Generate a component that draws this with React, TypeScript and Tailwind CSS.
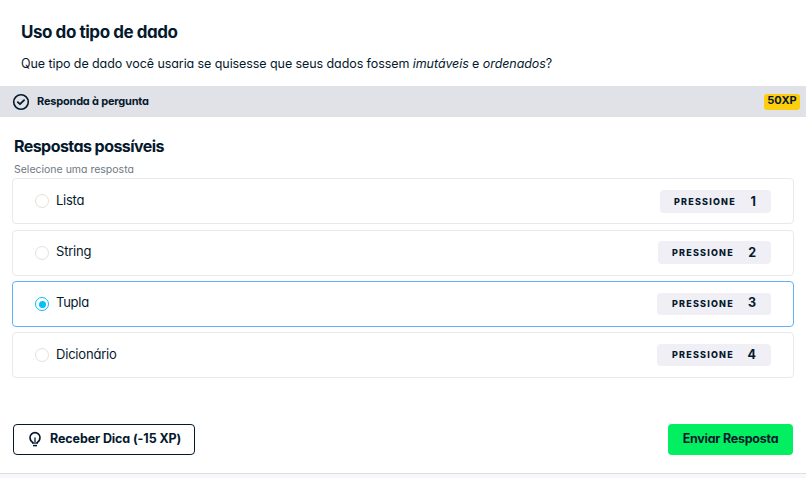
import React from "react";

type Answer = {
  label: string;
  labelClass: string;
  rowClass: string;
  badgeClass: string;
  digitClass: string;
};

const answers: Answer[] = [
  { label: "Lista", labelClass: "pb-[3px] tracking-[-0.25px]", rowClass: "mb-[6px]", badgeClass: "h-[23px] w-[111px] mt-[1px] pl-[14px]", digitClass: "" },
  { label: "String", labelClass: "pb-[4px] tracking-[-0.2px]", rowClass: "mb-[5px]", badgeClass: "h-[23px] w-[113px] mt-[-1px] pl-[14px]", digitClass: "" },
  { label: "Tupla", labelClass: "pb-[4px] tracking-[-0.25px]", rowClass: "mb-[5px]", badgeClass: "h-[22px] w-[114px] pl-[15px]", digitClass: "pb-[2px]" },
  { label: "Dicionário", labelClass: "pb-[3px] tracking-[-0.2px]", rowClass: "", badgeClass: "h-[22px] w-[114px] pl-[15px]", digitClass: "" },
];

function CheckCircle() {
  return (
    <svg className="h-[18px] w-[18px] shrink-0" viewBox="0 0 18 18" fill="none" stroke="#05192d">
      <circle cx="9" cy="9" r="7.3" strokeWidth="1.6" />
      <path d="M5.8 9.100 8 11.200l4.100-4.100" strokeWidth="1.800" strokeLinecap="round" strokeLinejoin="round" />
    </svg>
  );
}

function Bulb() {
  return (
    <svg className="-mt-px h-[16px] w-[12px] shrink-0" viewBox="0 0 12 16" fill="none" stroke="#05192d">
      <path d="M4 13V11.600C2.100 10.600 1 8.700 1 6.600a5 5 0 0 1 10 0c0 2.100-1.100 4-3 5V13" strokeWidth="1.600" />
      <path d="M6 6.500v6.500" strokeWidth="1.300" />
      <path d="M4 14.600h4" strokeWidth="1.500" />
    </svg>
  );
}

export default function App() {
  const [selected, setSelected] = React.useState(2);
  return (
    <main className="flex h-[478px] w-[806px] flex-col overflow-hidden bg-white font-['Inter','Liberation_Sans',sans-serif] text-[#05192d] [font-feature-settings:'cv11']">
      <header className="flex h-[86px] shrink-0 flex-col items-start pl-[21px] pt-[22px] whitespace-nowrap">
        <h1 className="text-[17px] leading-5 font-bold tracking-[-0.45px]">Uso do tipo de dado</h1>
        <p className="mt-[12px] text-[12.5px] leading-5 tracking-[-0.08px]">
          Que tipo de dado você usaria se quisesse que seus dados fossem <em>imutáveis</em> e <em>ordenados</em>?
        </p>
      </header>

      <div className="flex h-[31px] shrink-0 items-center bg-[#e1e2e7] pr-[6px] pl-[12px]">
        <CheckCircle />
        <span className="ml-[7px] pb-px text-[11px] leading-4 font-bold tracking-[-0.2px]">Responda à pergunta</span>
        <span className="ml-auto flex h-[16px] w-[36px] items-center justify-center rounded-[3px] bg-[#fcce0d] pb-[3px] text-[11px] leading-none font-bold">
          50XP
        </span>
      </div>

      <section className="flex shrink-0 flex-col pr-[12px] pl-[12px] pt-[19px]">
        <h2 className="pl-[2px] text-[16px] leading-5 font-bold tracking-[-0.56px]">Respostas possíveis</h2>
        <p className="mt-[6px] pl-[2px] text-[10.5px] leading-4 text-[#6f7782]">Selecione uma resposta</p>
        <div className="flex flex-col">
          {answers.map((a, i) => (
            <label
              key={a.label}
              className={`flex h-[46px] items-center rounded-[4px] border pr-[22px] pl-[22px] ${a.rowClass} ${
                selected === i ? "border-[#5eb1ff]" : "border-[#e8e8ee]"
              }`}
            >
              <input type="radio" name="answer" className="sr-only" checked={selected === i} onChange={() => setSelected(i)} />
              <span
                className={`flex h-[14px] w-[14px] items-center justify-center rounded-full border ${
                  selected === i ? "border-[#06bdfc]" : "border-[#e5e1da]"
                }`}
              >
                {selected === i && <span className="h-[7px] w-[7px] rounded-full bg-[#06bdfc]" />}
              </span>
              <span className={`ml-[7px] text-[13px] leading-5 ${a.labelClass}`}>{a.label}</span>
              <span className={`ml-auto flex items-center justify-between rounded-[4px] bg-[#efeff5] pr-[15px] ${a.badgeClass}`}>
                <span className="text-[9px] leading-4 font-extrabold tracking-[1.2px]">PRESSIONE</span>
                <span className={`text-[12.5px] leading-4 font-bold ${a.digitClass}`}>{i + 1}</span>
              </span>
            </label>
          ))}
        </div>
      </section>

      <footer className="mt-[46px] flex h-[31px] shrink-0 items-center justify-between pr-[13px] pl-[13px]">
        <button className="flex h-[31px] w-[182px] items-center rounded-[4px] border border-[#05192d] pl-[15px] text-[12.5px] font-bold tracking-[-0.1px] whitespace-nowrap">
          <Bulb />
          <span className="ml-[9px]">Receber Dica (-15 XP)</span>
        </button>
        <button className="flex h-[31px] w-[125px] items-center justify-center rounded-[4px] bg-[#03ef62] text-[12.5px] font-bold tracking-[-0.25px] whitespace-nowrap">
          Enviar Resposta
        </button>
      </footer>
      <div className="mt-[18px] h-[5px] border-t border-[#dddee3] bg-[#f7f7fc]" />
    </main>
  );
}
